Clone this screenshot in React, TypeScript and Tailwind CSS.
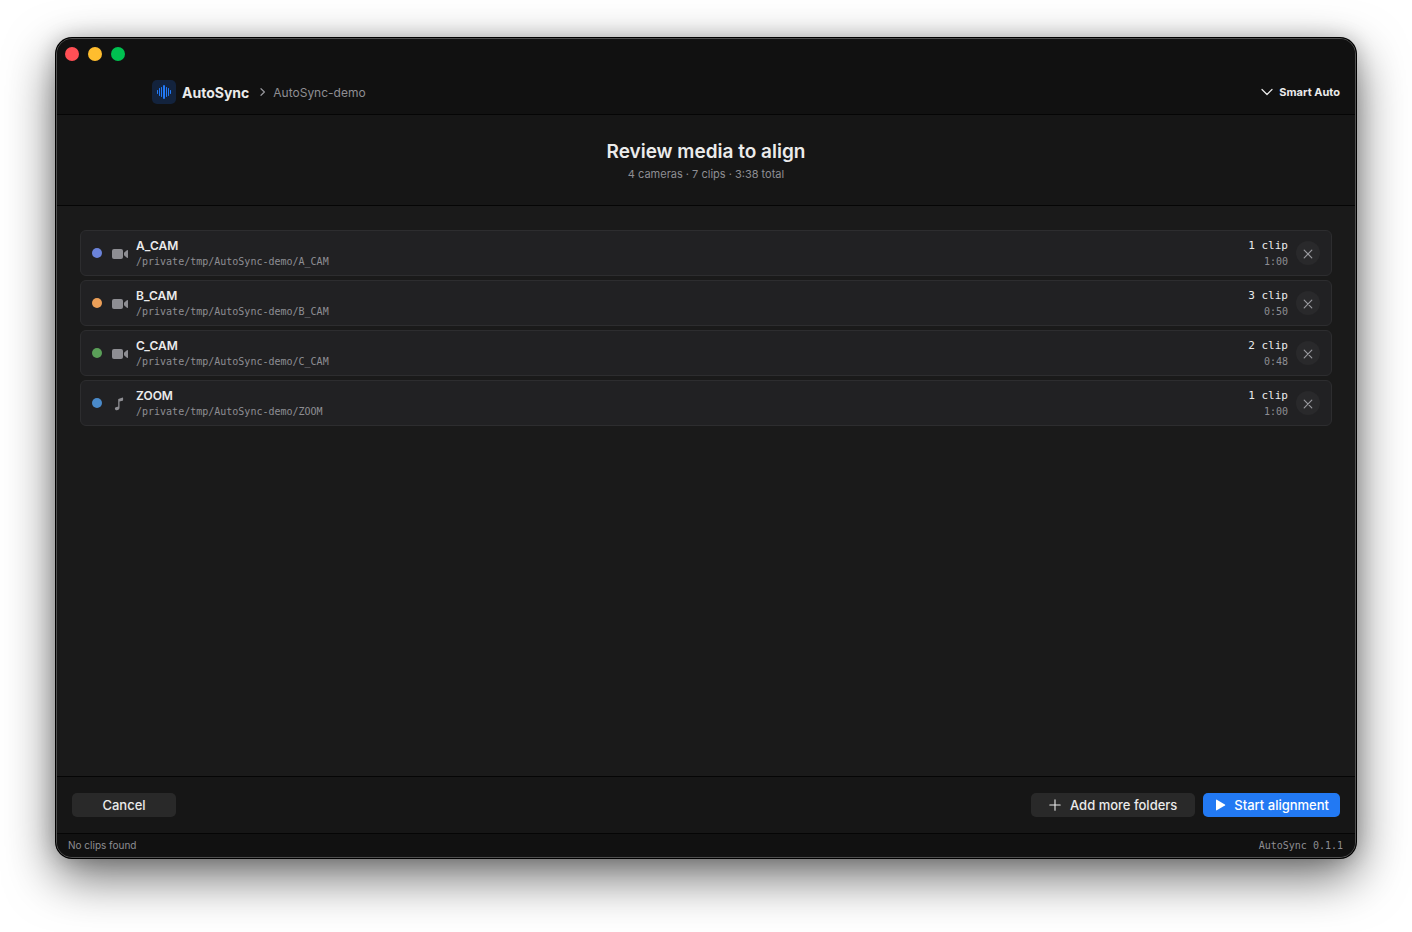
import React from "react";

type Track = {
  name: string;
  path: string;
  clips: string;
  duration: string;
  dot: string;
  kind: "video" | "audio";
};

const tracks: Track[] = [
  {
    name: "A_CAM",
    path: "/private/tmp/AutoSync-demo/A_CAM",
    clips: "1 clip",
    duration: "1:00",
    dot: "bg-[#6b83da]",
    kind: "video",
  },
  {
    name: "B_CAM",
    path: "/private/tmp/AutoSync-demo/B_CAM",
    clips: "3 clip",
    duration: "0:50",
    dot: "bg-[#eb9f58]",
    kind: "video",
  },
  {
    name: "C_CAM",
    path: "/private/tmp/AutoSync-demo/C_CAM",
    clips: "2 clip",
    duration: "0:48",
    dot: "bg-[#5a9f58]",
    kind: "video",
  },
  {
    name: "ZOOM",
    path: "/private/tmp/AutoSync-demo/ZOOM",
    clips: "1 clip",
    duration: "1:00",
    dot: "bg-[#4a8aca]",
    kind: "audio",
  },
];

const LogoIcon = () => (
  <svg width="24" height="24" viewBox="0 0 24 24" aria-hidden="true">
    <rect width="24" height="24" rx="5" fill="#13233d" />
    <g stroke="#2379f4" strokeLinecap="round">
      <path
        d="M5.5 10.5v3M7.5 8.5v7M9.5 7.5v9M14.5 7.5v9M16.5 8.5v7M18.5 10.5v3"
        strokeWidth="1"
      />
      <path d="M12 6v12" strokeWidth="2" />
    </g>
  </svg>
);

const VideoIcon = () => (
  <svg width="16" height="12" viewBox="0 0 16 12" fill="#8e8e93" aria-hidden="true">
    <rect y="1" width="11" height="10" rx="2" />
    <path d="M12 4.7 14.9 2.3Q16 1.6 16 2.8V9.2Q16 10.4 14.9 9.7L12 7.3Z" />
  </svg>
);

const NoteIcon = () => (
  <svg width="16" height="14" viewBox="0 0 16 14" fill="#8e8e93" aria-hidden="true">
    <path d="M6.4 1.9 10.6.6Q11.1.5 11.1 1V3.1Q11.1 3.6 10.6 3.7L7.5 4.6V10.6C7.5 12.3 6.4 13.3 4.8 13.3 3.6 13.3 2.9 12.7 2.9 11.8 2.9 10.9 3.5 10.3 4.6 10.1L5.8 9.8Q6.2 9.7 6.2 9.2V2.3Q6.2 2 6.4 1.9Z" />
  </svg>
);

const TrackRow = ({ track }: { track: Track }) => (
  <li className="flex items-center rounded-md border border-[#2d2d2f] bg-[#212123] px-[11px] py-[5px]">
    <span className={`size-[10px] rounded-full ${track.dot}`} />
    <span className="ml-[10px] mt-[2px]">
      {track.kind === "video" ? <VideoIcon /> : <NoteIcon />}
    </span>
    <div className="ml-2 min-w-0 flex-1 pt-[2px]">
      <h2 className="text-[12px] leading-4 font-semibold text-[#ebebeb]">
        {track.name}
      </h2>
      <p className="truncate font-['DejaVu_Sans_Mono',monospace] text-[10px] leading-4 text-[#8e8e93]">
        {track.path}
      </p>
    </div>
    <div className="pt-[2px] text-right font-['DejaVu_Sans_Mono',monospace]">
      <p className="text-[11px] leading-4 text-[#ebebeb]">{track.clips}</p>
      <p className="text-[10px] leading-4 text-[#8e8e93]">{track.duration}</p>
    </div>
    <button
      type="button"
      aria-label={`Remove ${track.name}`}
      className="ml-2 flex size-6 items-center justify-center rounded-full bg-[#29292b]"
    >
      <svg width="10" height="10" viewBox="0 0 10 10" aria-hidden="true" className="mt-[2px]">
        <path
          d="M1.2 1.2 8.8 8.8M8.8 1.2 1.2 8.8"
          stroke="#98989d"
          strokeWidth="1.2"
          strokeLinecap="round"
        />
      </svg>
    </button>
  </li>
);

const App = () => {
  return (
    <div className="flex min-h-screen flex-col bg-white px-14 pt-[38px] pb-[74px] font-[Inter,sans-serif] text-[#ebebeb]">
      <div className="flex flex-1 flex-col overflow-hidden rounded-2xl border border-[#505050] bg-[#1a1a1a] shadow-[0_0_0_1px_#000,0_18px_50px_rgba(0,0,0,0.6),0_0_20px_rgba(0,0,0,0.2)]">
        <header className="border-b border-[#050505] bg-[#111111]">
          <div className="flex h-[30px] items-center gap-[9px] pl-2">
            <button type="button" aria-label="Close" className="size-[14px] rounded-full bg-[#ff4f55]" />
            <button type="button" aria-label="Minimize" className="size-[14px] rounded-full bg-[#ffbd2e]" />
            <button type="button" aria-label="Zoom" className="size-[14px] rounded-full bg-[#00c150]" />
          </div>
          <div className="flex h-[45px] items-center pr-[15px] pl-[95px]">
            <LogoIcon />
            <h1 className="ml-[6px] pt-[2px] text-[14px] font-bold">AutoSync</h1>
            <svg width="6" height="10" viewBox="0 0 6 10" fill="none" aria-hidden="true" className="ml-[11px]">
              <path d="M1 1.7 4.4 5 1 8.3" stroke="#98989d" strokeWidth="1.2" strokeLinecap="round" strokeLinejoin="round" />
            </svg>
            <span className="ml-[7px] pt-[2px] text-[12px] text-[#8e8e93]">AutoSync-demo</span>
            <button type="button" className="ml-auto flex items-center gap-[6px] text-[11px] font-bold">
              <svg width="12" height="8" viewBox="0 0 12 8" fill="none" aria-hidden="true">
                <path d="M1 1.5 6 6.5 11 1.5" stroke="#ebebeb" strokeWidth="1.2" strokeLinecap="round" strokeLinejoin="round" />
              </svg>
              <span className="pt-[2px]">Smart Auto</span>
            </button>
          </div>
        </header>

        <section className="border-b border-[#050505] bg-[#161616] pt-[25px] pb-[23px] text-center">
          <h2 className="text-[19px] leading-6 font-semibold">Review media to align</h2>
          <p className="pt-[2px] text-[11px] leading-4 text-[#8e8e93]">
            4 cameras · 7 clips · 3:38 total
          </p>
        </section>

        <main className="flex-1 px-[23px] py-6">
          <ul className="flex flex-col gap-1">
            {tracks.map((track) => (
              <TrackRow key={track.name} track={track} />
            ))}
          </ul>
        </main>

        <div className="flex items-center gap-2 border-t border-[#050505] bg-[#161616] px-[15px] py-4 text-[13px] font-medium">
          <button type="button" className="h-6 w-[104px] rounded-[5px] bg-[#292929] pt-px">
            Cancel
          </button>
          <button type="button" className="ml-auto flex h-6 items-center gap-[9px] rounded-[5px] bg-[#292929] px-[18px]">
            <svg width="12" height="12" viewBox="0 0 12 12" aria-hidden="true">
              <path d="M6 .8V11.2M.8 6H11.2" stroke="#ebebeb" strokeWidth="1.1" strokeLinecap="round" />
            </svg>
            <span className="pt-px">Add more folders</span>
          </button>
          <button type="button" className="flex h-6 items-center gap-2 rounded-[5px] bg-[#2279f3] px-[11px] text-white">
            <svg width="12" height="12" viewBox="0 0 12 12" fill="white" aria-hidden="true">
              <path d="M2 1.2Q2 .3 2.8.7L10.9 5.4Q11.8 6 10.9 6.6L2.8 11.3Q2 11.7 2 10.8Z" />
            </svg>
            <span className="pt-px">Start alignment</span>
          </button>
        </div>

        <footer className="flex h-6 items-center justify-between border-t border-[#050505] bg-[#111111] pr-3 pl-[11px] text-[10px] text-[#8e8e93]">
          <span>No clips found</span>
          <span className="font-['DejaVu_Sans_Mono',monospace]">AutoSync 0.1.1</span>
        </footer>
      </div>
    </div>
  );
};

export default App;
